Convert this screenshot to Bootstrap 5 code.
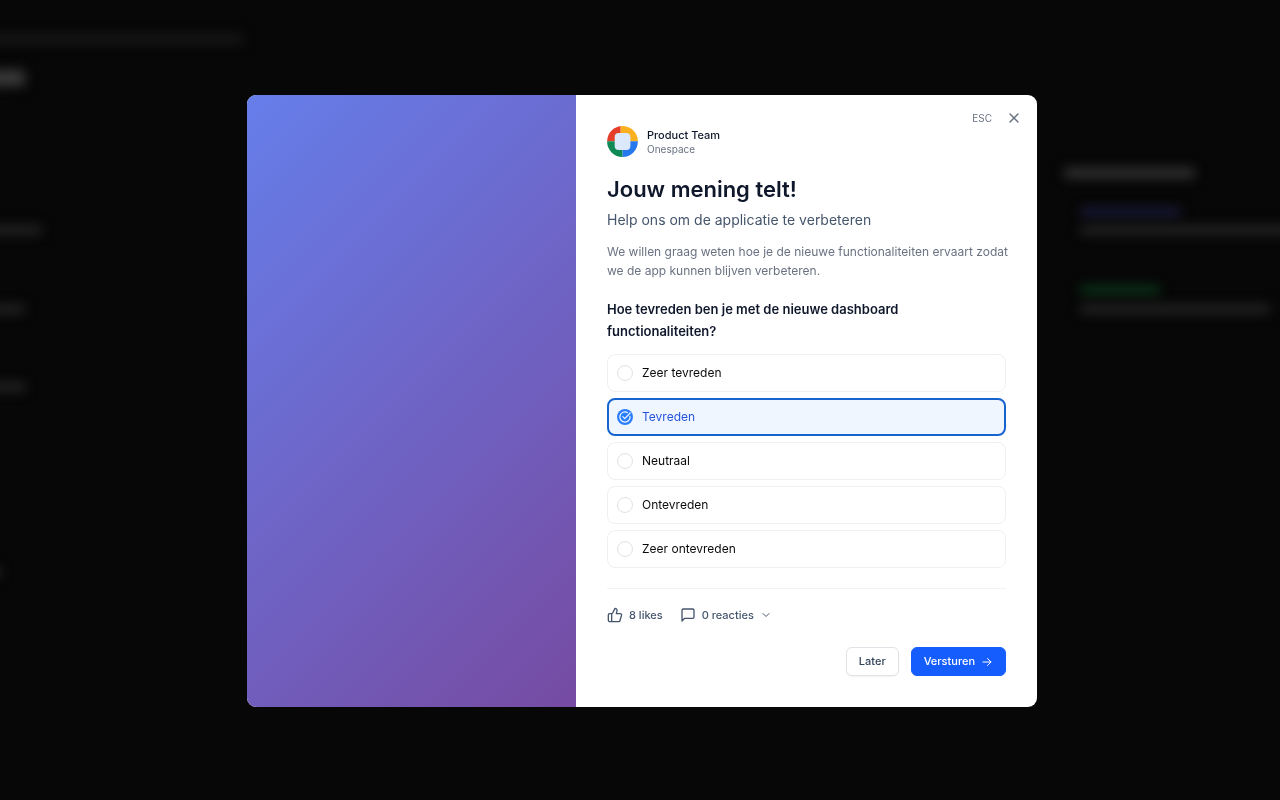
<!DOCTYPE html>
<html lang="nl">
<head>
<meta charset="utf-8">
<meta name="viewport" content="width=device-width, initial-scale=1">
<title>Jouw mening telt!</title>
<link href="https://cdn.jsdelivr.net/npm/bootstrap@5.3.0/dist/css/bootstrap.min.css" rel="stylesheet">
<style>
  body { background: #070707; font-family: Inter, "Liberation Sans", sans-serif; font-size: 12px; color: #0f172b; }
  svg { display: block; flex: none; }

  /* Dimmed page behind the dialog */
  .backdrop-page { min-height: 100vh; overflow: hidden; }
  .smudge { height: 8px; border-radius: 4px; background: #282828; filter: blur(6px); }
  .page-main { width: 247px; padding-top: 35px; margin-left: -20px; }
  .page-aside { width: 240px; padding-top: 168px; margin-right: -24px; }

  .modal { --bs-modal-width: 790px; padding: 2px 0 0 4px; }
  .modal-content { border: 0; border-radius: 9px; overflow: hidden; flex-direction: row; color: inherit; }
  .visual { flex: 0 0 329px; background: linear-gradient(135deg, #667eea 0%, #764ba2 100%); }
  .survey { min-width: 0; padding: 31px; }
  .dismiss { position: absolute; top: 13px; right: 13px; gap: 12px; }
  .dismiss span { font-size: 10px; color: #6a7282; }
  .dismiss .btn { padding: 2px; color: #6a7282; }
  .team { gap: 9px; height: 31px; margin-bottom: 17px; line-height: 14px; }
  .team-name { font-size: 11px; font-weight: 500; }
  .team-org { font-size: 10px; color: #6a7282; }
  h1 { font-size: 22px; line-height: 30px; font-weight: 600; margin-bottom: 4px; }
  .subtitle { font-size: 14px; line-height: 24px; color: #45556c; margin-bottom: 10px; }
  /* The running text may reach a little into the side padding */
  .intro { font-size: 12px; line-height: 19px; color: #6a7282; margin: 0 -8px 18px 0; }
  legend { font-size: 13px; line-height: 22px; font-weight: 600; margin-bottom: 12px; }
  .options { gap: 6px; }
  .option { height: 38px; padding: 0 9px; gap: 9px; border: 1px solid #f0f0f1; border-radius: 8px; font-size: 12px; color: #0a0a0a; cursor: pointer; }
  .option .form-check-input { width: 16px; height: 16px; margin: 0; border: 1px solid #e1e2e4; flex: none; box-shadow: none; }
  .option:has(:checked) { background: #eff6ff; border: 2px solid #1764cf; padding: 0 8px; color: #2653db; }
  .option .form-check-input:checked { border: 0; background-color: #2b7fff; background-size: 16px;
    background-image: url("data:image/svg+xml,%3Csvg xmlns='http://www.w3.org/2000/svg' viewBox='0 0 16 16' fill='none' stroke='%23eff6ff' stroke-width='1.2' stroke-linecap='round' stroke-linejoin='round'%3E%3Cpath d='M13 7.3A5.1 5.1 0 1 1 10.4 3.5M5.9 7.7l1.9 1.9 5.4-5.6'/%3E%3C/svg%3E"); }
  .rule { border-top: 1px solid #f1f3f5; margin: 20px 0 14px; }
  .reactions { gap: 17px; margin-bottom: 20px; }
  .reactions .btn { padding: 0; gap: 6px; height: 24px; font-size: 11px; font-weight: 500; color: #45556c; }
  .actions { gap: 12px; }
  .actions .btn { height: 29px; padding: 0 12px; border-radius: 6px; font-size: 11px; font-weight: 500; }
  .btn-later { --bs-btn-color: #314158; --bs-btn-border-color: #dfe3e8; --bs-btn-bg: #fff; box-shadow: 0 1px 2px #0000000d; }
  .btn-send { --bs-btn-color: #fff; --bs-btn-bg: #155dfc; --bs-btn-border-color: #155dfc; --bs-btn-hover-color: #fff; --bs-btn-hover-bg: #1450df; gap: 6px; }
</style>
</head>
<body>
<div class="backdrop-page d-flex justify-content-between" aria-hidden="true">
  <div class="page-main">
    <div class="smudge" style="width:263px;background:#1b1b1b"></div>
    <div class="smudge" style="width:45px;height:16px;margin-top:27px;background:#3a3a3a"></div>
    <div class="smudge" style="width:62px;margin-top:140px"></div>
    <div class="smudge" style="width:45px;margin-top:71px"></div>
    <div class="smudge" style="width:46px;margin-top:70px"></div>
    <div class="smudge" style="width:22px;margin-top:177px"></div>
  </div>
  <div class="page-aside">
    <div class="smudge" style="width:131px;height:10px;background:#333"></div>
    <div class="ps-3 ms-n1">
      <div class="smudge" style="width:101px;margin-top:30px;background:#1c1c42"></div>
      <div class="smudge" style="width:230px;margin-top:10px"></div>
      <div class="smudge" style="width:80px;margin-top:52px;background:#0b3b1a"></div>
      <div class="smudge" style="width:190px;margin-top:11px"></div>
    </div>
  </div>
</div>

<div class="modal d-block" role="dialog" aria-modal="true" aria-labelledby="surveyTitle">
  <div class="modal-dialog modal-dialog-centered">
    <div class="modal-content">
      <div class="visual"></div>
      <form class="survey flex-grow-1" onsubmit="return false">
        <div class="dismiss d-flex align-items-center">
          <span>ESC</span>
          <button type="button" class="btn border-0" aria-label="Sluiten">
            <svg width="16" height="16" viewBox="0 0 24 24" fill="none" stroke="currentColor" stroke-width="2.2" stroke-linecap="round"><path d="M18 6 6 18M6 6l12 12"/></svg>
          </button>
        </div>

        <div class="team d-flex align-items-center">
          <svg width="31" height="31" viewBox="0 0 31 31" aria-hidden="true">
            <clipPath id="disc"><circle cx="15.5" cy="15.5" r="15.4"/></clipPath>
            <g clip-path="url(#disc)">
              <path fill="#e43e2b" d="M0 0h13.7v15.3H0z"/><path fill="#fbb022" d="M13.7 0H31v15.3H13.7z"/>
              <path fill="#0f8a55" d="M0 15.3h15.6V31H0z"/><path fill="#2878ed" d="M15.6 15.3H31V31H15.6z"/>
            </g>
            <rect x="7.7" y="6.9" width="15.7" height="17.2" rx="4" fill="#dce8fc"/>
          </svg>
          <div>
            <div class="team-name">Product Team</div>
            <div class="team-org">Onespace</div>
          </div>
        </div>

        <h1 id="surveyTitle">Jouw mening telt!</h1>
        <p class="subtitle">Help ons om de applicatie te verbeteren</p>
        <p class="intro">We willen graag weten hoe je de nieuwe functionaliteiten ervaart zodat we de app kunnen blijven verbeteren.</p>

        <fieldset>
          <legend>Hoe tevreden ben je met de nieuwe dashboard functionaliteiten?</legend>
          <div class="options d-flex flex-column">
            <label class="option d-flex align-items-center"><input class="form-check-input" type="radio" name="score">Zeer tevreden</label>
            <label class="option d-flex align-items-center"><input class="form-check-input" type="radio" name="score" checked>Tevreden</label>
            <label class="option d-flex align-items-center"><input class="form-check-input" type="radio" name="score">Neutraal</label>
            <label class="option d-flex align-items-center"><input class="form-check-input" type="radio" name="score">Ontevreden</label>
            <label class="option d-flex align-items-center"><input class="form-check-input" type="radio" name="score">Zeer ontevreden</label>
          </div>
        </fieldset>

        <div class="rule"></div>

        <div class="reactions d-flex">
          <button type="button" class="btn border-0 d-flex align-items-center">
            <svg width="16" height="16" viewBox="0 0 24 24" fill="none" stroke="currentColor" stroke-width="2" stroke-linecap="round" stroke-linejoin="round"><path d="M7 10v12M15 5.88 14 10h5.83a2 2 0 0 1 1.92 2.56l-2.33 8A2 2 0 0 1 17.5 22H4a2 2 0 0 1-2-2v-8a2 2 0 0 1 2-2h2.76a2 2 0 0 0 1.79-1.11L12 2a3.13 3.13 0 0 1 3 3.88Z"/></svg>
            8 likes
          </button>
          <button type="button" class="btn border-0 d-flex align-items-center">
            <svg width="16" height="16" viewBox="0 0 24 24" fill="none" stroke="currentColor" stroke-width="2" stroke-linecap="round" stroke-linejoin="round"><path d="M21 15a2 2 0 0 1-2 2H7l-4 4V5a2 2 0 0 1 2-2h14a2 2 0 0 1 2 2z"/></svg>
            0 reacties
            <svg width="12" height="12" viewBox="0 0 24 24" fill="none" stroke="currentColor" stroke-width="2" stroke-linecap="round" stroke-linejoin="round"><path d="m6 9 6 6 6-6"/></svg>
          </button>
        </div>

        <div class="actions d-flex justify-content-end">
          <button type="button" class="btn btn-later">Later</button>
          <button type="submit" class="btn btn-send d-flex align-items-center">Versturen
            <svg width="12" height="12" viewBox="0 0 24 24" fill="none" stroke="currentColor" stroke-width="2" stroke-linecap="round" stroke-linejoin="round"><path d="M4 12h16M13 5l7 7-7 7"/></svg>
          </button>
        </div>
      </form>
    </div>
  </div>
</div>
<script src="https://cdn.jsdelivr.net/npm/bootstrap@5.3.0/dist/js/bootstrap.bundle.min.js"></script>
</body>
</html>
